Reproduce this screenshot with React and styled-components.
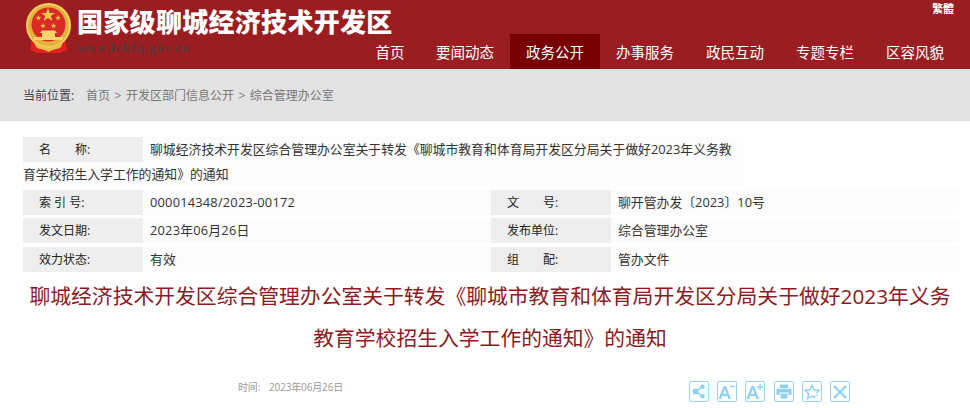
import React from "react";
import styled, { createGlobalStyle } from "styled-components";

const GlobalStyle = createGlobalStyle`
  html, body {
    margin: 0;
    padding: 0;
    background: #fff;
    font-family: "Open Sans", "Noto Sans CJK SC", sans-serif;
  }
  * { box-sizing: border-box; }
`;

const Page = styled.div`
  width: 970px;
  height: 408px;
  overflow: hidden;
`;
const Header = styled.header`
  height: 69px;
  background: #9a1d21;
  display: flex;
  justify-content: space-between;
  padding: 3px 10px 0 25px;
`;
const Brand = styled.div`
  flex: none;
  width: 335px;
  display: flex;
  gap: 5px;
  align-items: flex-start;
`;
const EmblemSvg = styled.svg`
  flex: none;
`;
const BrandText = styled.div`
  display: flex;
  flex-direction: column;
`;
const SiteName = styled.div`
  font-family: "Noto Sans CJK SC", sans-serif;
  font-size: 26px;
  font-weight: 900;
  letter-spacing: 0.3px;
  line-height: 32px;
  margin-top: 2px;
  color: #fff;
  white-space: nowrap;
`;
const SiteUrl = styled.div`
  font-family: "Liberation Serif", serif;
  font-size: 12px;
  font-weight: 700;
  letter-spacing: 1.5px;
  line-height: 14px;
  margin-top: 4px;
  color: #4f383b;
`;
const HeaderRight = styled.div`
  display: flex;
  flex-direction: column;
  align-items: flex-end;
`;
const Lang = styled.a`
  font-size: 11px;
  font-weight: 700;
  line-height: 12px;
  margin: 0 6px 19px 0;
  color: #fff;
`;
const Nav = styled.nav`
  display: flex;
`;
const NavItem = styled.a`
  width: ${(p) => (p.$short ? 60 : 90)}px;
  height: 35px;
  line-height: 37px;
  font-size: 14.5px;
  text-align: center;
  color: #fff;
  white-space: nowrap;
  background: ${(p) => (p.$active ? "#770000" : "transparent")};
`;
const Crumbs = styled.div`
  height: 52px;
  background: #e3e3e3;
  padding-left: 23px;
  display: flex;
  align-items: center;
  font-size: 12px;
  color: #777;
`;
const CrumbLabel = styled.span`
  width: 63px;
  color: #444;
`;
const CrumbSep = styled.span`
  margin: 0 4.5px;
`;
const Meta = styled.section`
  margin: 16px 11px 0 23px;
  font-size: 12.85px;
  color: #333;
`;
const NameRow = styled.div`
  width: 720px;
  line-height: 25px;
  height: 50px;
  margin-bottom: 3px;
  background: #fcfcfc;
`;
const Grid = styled.div`
  display: grid;
  grid-template-columns: 468px 1fr;
`;
const Cell = styled.div`
  display: flex;
  height: 25px;
  margin-bottom: ${(p) => p.$gap}px;
  line-height: 25px;
  background: #fcfcfc;
`;
const Label = styled.span`
  flex: none;
  width: 120px;
  padding-left: 16px;
  font-size: 12px;
  background: #eee;
  color: #222;
  white-space: pre;
`;
const FloatLabel = styled(Label)`
  display: block;
  float: left;
  height: 25px;
  margin-right: 7px;
`;
const Value = styled.span`
  margin-left: 7px;
  letter-spacing: ${(p) => (p.$digits ? "0.2px" : "0")};
`;
const Title = styled.h1`
  margin: 3px 0 0;
  padding: 0 12px 0 22px;
  font-size: 20.8px;
  font-weight: 400;
  line-height: 42px;
  text-align: center;
  color: #8c1a1e;
`;
const Toolbar = styled.div`
  display: flex;
  align-items: flex-start;
  margin-top: 22px;
  padding-left: 238px;
`;
const Time = styled.span`
  font-size: 10px;
  line-height: 12px;
  color: #999;
  width: 451px;
  letter-spacing: -0.15px;
`;
const TimeLabel = styled.span`
  display: inline-block;
  width: 31px;
`;
const Tools = styled.div`
  display: flex;
  gap: 8.2px;
`;
const ToolButton = styled.a`
  width: 20px;
  height: 21px;
  border: 1px solid #9ad6f4;
  border-radius: 2px;
  display: flex;
  align-items: center;
  justify-content: center;
  color: #8fd2f2;
`;

const Emblem = () => (
  <EmblemSvg width="47" height="50" viewBox="0 0 47 50">
    <path d="M7 36 L5 47 L12 50 H35 L42 47 L40 36 Z" fill="#e3201f" />
    <circle cx="23.5" cy="22.5" r="21.5" fill="#e3b23c" stroke="#f4d05a" strokeWidth="2" />
    <circle cx="23.5" cy="21.5" r="17" fill="#db2a26" />
    <polygon points="23,5 24.8,10 30,10 25.8,13 27.4,18 23,15 18.6,18 20.2,13 16,10 21.2,10" fill="#f3c94a" />
    <polygon points="13.5,12 14.3,14 16.3,14 14.7,15.3 15.3,17.3 13.5,16 11.7,17.3 12.3,15.3 10.7,14 12.7,14" fill="#f3c94a" />
    <polygon points="33,12 33.8,14 35.8,14 34.2,15.3 34.8,17.3 33,16 31.2,17.3 31.8,15.3 30.2,14 32.2,14" fill="#f3c94a" />
    <polygon points="18,20 18.8,22 20.8,22 19.2,23.3 19.8,25.3 18,24 16.2,25.3 16.8,23.3 15.2,22 17.2,22" fill="#f3c94a" />
    <polygon points="28.5,20 29.3,22 31.3,22 29.7,23.3 30.3,25.3 28.5,24 26.7,25.3 27.3,23.3 25.7,22 27.7,22" fill="#f3c94a" />
    <path d="M15 30 H32 L30 27.5 H17 Z" fill="#f6d468" />
    <rect x="17" y="30" width="13" height="4" fill="#f6d468" />
    <rect x="9" y="34" width="29" height="3" fill="#f6d468" />
    <path d="M9 39 C14 45 19 41 23.5 45 C28 41 33 45 38 39 L36 44 C32 47 27 46 23.5 49 C20 46 15 47 11 44 Z" fill="#eec24a" />
  </EmblemSvg>
);

const ShareIcon = () => (
  <svg width="14" height="15" viewBox="0 0 14 15" fill="currentColor">
    <circle cx="3.5" cy="7.5" r="3" />
    <circle cx="10.5" cy="2.8" r="2.3" />
    <circle cx="10.5" cy="12.2" r="2.3" />
    <path d="M3.5 7.5 L10.5 2.8 M3.5 7.5 L10.5 12.2" stroke="currentColor" strokeWidth="1.6" />
  </svg>
);
const FontIcon = ({ plus }) => (
  <svg width="18" height="17" viewBox="0 0 18 17" fill="currentColor">
    <path d="M0.5 16 L5.5 3 H8 L13 16 H10.4 L9.3 13 H4.2 L3.1 16 Z M5 10.8 H8.5 L6.8 6 Z" />
    <path d={plus ? "M11 4 H17 M14 1 V7" : "M12 3.5 H17"} stroke="currentColor" strokeWidth="1.3" fill="none" />
  </svg>
);
const PrintIcon = () => (
  <svg width="16" height="15" viewBox="0 0 16 15" fill="currentColor">
    <path d="M4 0.5 H12 V4 H4 Z" />
    <path d="M1.5 4.8 H14.5 A1 1 0 0 1 15.5 5.8 V11 H12.5 V8.5 H3.5 V11 H0.5 V5.8 A1 1 0 0 1 1.5 4.8 Z" />
    <path d="M4.5 9.5 H11.5 V14.5 H4.5 Z" />
  </svg>
);
const StarIcon = () => (
  <svg width="16" height="16" viewBox="0 0 16 16" fill="none" stroke="currentColor" strokeWidth="1.5">
    <path d="M11 13.3 L8 12.2 L3.6 14.5 L4.6 9.7 L1 6.4 L6 5.8 L8 1.5 L10 5.8 L15 6.4 L12.5 9" />
    <path d="M10 11.5 L11.5 12.5 L14 10" strokeWidth="1" />
  </svg>
);
const CloseIcon = () => (
  <svg width="14" height="14" viewBox="0 0 14 14" stroke="currentColor" strokeWidth="2.2">
    <path d="M1 1 L13 13 M13 1 L1 13" />
  </svg>
);

const navItems = ["首页", "要闻动态", "政务公开", "办事服务", "政民互动", "专题专栏", "区容风貌"];
const metaRows = [
  ["索 引 号:", "000014348/2023-00172", "文\u3000\u3000号:", "聊开管办发〔2023〕10号", 3],
  ["发文日期:", "2023年06月26日", "发布单位:", "综合管理办公室", 4],
  ["效力状态:", "有效", "组\u3000\u3000配:", "管办文件", 0],
];

export default function App() {
  return (
    <Page>
      <GlobalStyle />
      <Header>
        <Brand>
          <Emblem />
          <BrandText>
            <SiteName>国家级聊城经济技术开发区</SiteName>
            <SiteUrl>www.lckfq.gov.cn</SiteUrl>
          </BrandText>
        </Brand>
        <HeaderRight>
          <Lang>繁體</Lang>
          <Nav>
            {navItems.map((item) => (
              <NavItem key={item} $short={item === "首页"} $active={item === "政务公开"}>
                {item}
              </NavItem>
            ))}
          </Nav>
        </HeaderRight>
      </Header>
      <Crumbs>
        <CrumbLabel>当前位置:</CrumbLabel>
        首页
        <CrumbSep>&gt;</CrumbSep>
        开发区部门信息公开
        <CrumbSep>&gt;</CrumbSep>
        综合管理办公室
      </Crumbs>
      <Meta>
        <NameRow>
          <FloatLabel>{"名\u3000\u3000称:"}</FloatLabel>
          聊城经济技术开发区综合管理办公室关于转发《聊城市教育和体育局开发区分局关于做好2023年义务教育学校招生入学工作的通知》的通知
        </NameRow>
        <Grid>
          {metaRows.map(([l1, v1, l2, v2, gap]) => (
            <React.Fragment key={l1}>
              <Cell $gap={gap}>
                <Label>{l1}</Label>
                <Value $digits>{v1}</Value>
              </Cell>
              <Cell $gap={gap}>
                <Label>{l2}</Label>
                <Value>{v2}</Value>
              </Cell>
            </React.Fragment>
          ))}
        </Grid>
      </Meta>
      <Title>
        聊城经济技术开发区综合管理办公室关于转发《聊城市教育和体育局开发区分局关于做好2023年义务教育学校招生入学工作的通知》的通知
      </Title>
      <Toolbar>
        <Time>
          <TimeLabel>时间:</TimeLabel>
          2023年06月26日
        </Time>
        <Tools>
          <ToolButton><ShareIcon /></ToolButton>
          <ToolButton><FontIcon /></ToolButton>
          <ToolButton><FontIcon plus /></ToolButton>
          <ToolButton><PrintIcon /></ToolButton>
          <ToolButton><StarIcon /></ToolButton>
          <ToolButton><CloseIcon /></ToolButton>
        </Tools>
      </Toolbar>
    </Page>
  );
}
